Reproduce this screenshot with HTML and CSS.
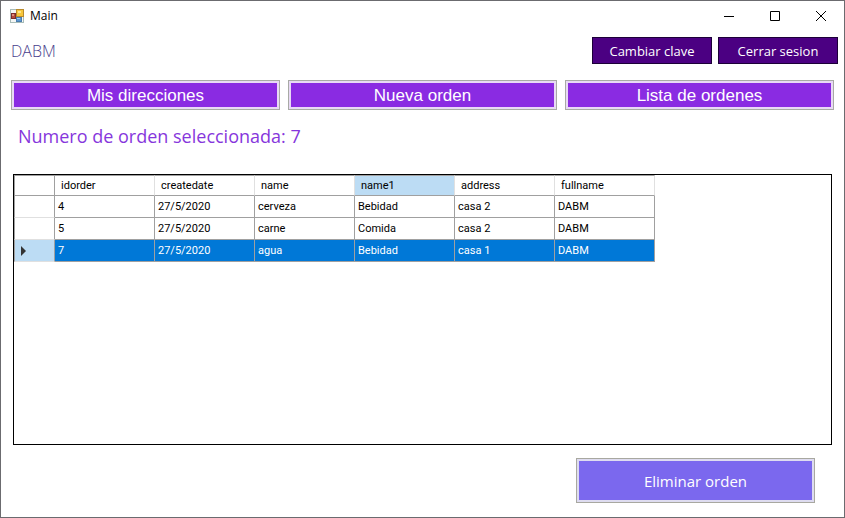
FILE: index.html
```html
<!DOCTYPE html>
<html lang="es">
<head>
<meta charset="utf-8">
<title>Main</title>
<link rel="stylesheet" href="styles.css">
</head>
<body>
<div class="window">
  <header class="titlebar">
    <svg class="app-icon" width="14" height="14" viewBox="0 0 14 14" aria-hidden="true">
      <rect x=".5" y=".5" width="13" height="13" fill="#f4f6f5" stroke="#a9bcb8"/>
      <rect x="6.5" y=".5" width="7" height="7" fill="#f6c63c" stroke="#b98a2c"/>
      <rect x="8" y="2" width="3" height="2" fill="#fde58c"/>
      <rect x="1.500" y="4.500" width="4" height="5" fill="#b5483c" stroke="#7c2b2b"/>
      <rect x="2" y="5" width="2" height="2" fill="#dd8a7d"/>
      <rect x="6.500" y="8.500" width="5" height="4" fill="#5b97d3" stroke="#4a7cae"/>
      <rect x="7" y="9" width="3" height="1" fill="#a9cdf0"/>
    </svg>
    <h1 class="title">Main</h1>
    <div class="controls">
      <button class="control" type="button" aria-label="Minimizar"><svg width="10" height="10" viewBox="0 0 10 10"><path d="M0 5.500H10"/></svg></button>
      <button class="control" type="button" aria-label="Maximizar"><svg width="10" height="10" viewBox="0 0 10 10"><path d="M.5 .5H9.500V9.500H.5Z"/></svg></button>
      <button class="control" type="button" aria-label="Cerrar"><svg width="10" height="10" viewBox="0 0 10 10"><path d="M0 0L10 10M10 0L0 10"/></svg></button>
    </div>
  </header>
  <div class="account">
    <span class="user">DABM</span>
    <button class="session" type="button">Cambiar clave</button>
    <button class="session" type="button">Cerrar sesion</button>
  </div>
  <nav class="tabs">
    <button class="tab" type="button">Mis direcciones</button>
    <button class="tab" type="button">Nueva orden</button>
    <button class="tab" type="button">Lista de ordenes</button>
  </nav>
  <main class="content">
    <p class="selected">Numero de orden seleccionada: 7</p>
    <div class="grid">
      <table class="orders">
        <thead>
          <tr><th class="marker"></th><th>idorder</th><th>createdate</th><th>name</th><th class="current">name1</th><th>address</th><th>fullname</th></tr>
        </thead>
        <tbody>
          <tr><th class="marker"></th><td>4</td><td>27/5/2020</td><td>cerveza</td><td>Bebidad</td><td>casa 2</td><td>DABM</td></tr>
          <tr><th class="marker"></th><td>5</td><td>27/5/2020</td><td>carne</td><td>Comida</td><td>casa 2</td><td>DABM</td></tr>
          <tr class="active"><th class="marker"><svg width="5" height="10" viewBox="0 0 5 10" aria-hidden="true"><path d="M0 0L5 5L0 10Z" fill="#333"/></svg></th><td>7</td><td>27/5/2020</td><td>agua</td><td>Bebidad</td><td>casa 1</td><td>DABM</td></tr>
        </tbody>
      </table>
    </div>
    <button class="delete" type="button">Eliminar orden</button>
  </main>
</div>
</body>
</html>
```
FILE: styles.css
```css
* { box-sizing: border-box; }

body {
  margin: 0;
  background: #fff;
  font-family: "Open Sans", "Noto Sans", sans-serif;
}

button {
  margin: 0;
  padding: 0;
  font-family: inherit;
  color: #fff;
}

.window {
  display: flex;
  flex-direction: column;
  min-height: 100vh;
  border: 1px solid #6b6b6f;
}

.titlebar {
  display: flex;
  align-items: center;
  height: 29px;
  padding-left: 9px;
}

.title {
  flex: 1;
  margin: 0 0 0 6px;
  font-size: 12px;
  font-weight: 400;
  line-height: 16px;
}

.controls { display: flex; align-self: stretch; }

.control {
  display: flex;
  align-items: center;
  justify-content: center;
  width: 46px;
  border: 0;
  background: none;
}

.control svg {
  fill: none;
  stroke: #000;
  overflow: visible;
}

.account {
  display: flex;
  gap: 6px;
  height: 27px;
  margin: 7px 6px 0 10px;
}

.user {
  flex: 1;
  color: #483d8b;
  font-size: 16px;
  font-weight: 300;
  line-height: 28px;
}

.session {
  width: 120px;
  border: 1px solid #1c0038;
  background: #4b0082;
  font-size: 13px;
}

.tabs {
  display: grid;
  grid-template-columns: repeat(3, 1fr);
  gap: 8px;
  margin: 16px 10px 0;
}

.tab {
  height: 30px;
  padding-top: 2px;
  border: 1px solid #a8aaa5;
  background: #8a2be2;
  box-shadow: inset 0 0 0 2px #e8d9f5;
  font-family: "Liberation Sans", sans-serif;
  font-size: 17px;
}

.content {
  display: flex;
  flex: 1;
  flex-direction: column;
  padding: 12px 12px 14px;
}

.selected {
  margin: 0 5px;
  color: #8636dc;
  font-size: 18px;
  line-height: 28px;
}

.grid {
  flex: 1;
  margin-top: 24px;
  border: 1px solid #000;
}

.orders {
  table-layout: fixed;
  width: 641px;
  border-spacing: 0;
  font-family: Roboto, "Liberation Sans", sans-serif;
  font-size: 11px;
  line-height: 16px;
}

.orders th,
.orders td {
  height: 22px;
  padding: 0 3px;
  border-right: 1px solid #a0a0a0;
  border-bottom: 1px solid #a0a0a0;
  font-weight: 400;
  text-align: left;
}

.orders thead th {
  height: 21px;
  padding-left: 6px;
  border-top: 1px solid #a0a0a0;
  border-right-color: #e0e0e0;
}

.orders .marker {
  width: 41px;
  border-left: 1px solid #a0a0a0;
  border-right-color: #a0a0a0;
}

.orders tbody .marker { border-bottom-color: #e0e0e0; }

.marker svg { display: block; margin-left: 3px; }

.orders .current,
.orders .active .marker { background: #bcdcf4; }

.active td {
  background: #0078d7;
  color: #fff;
}

.delete {
  align-self: flex-end;
  width: 239px;
  height: 45px;
  margin: 13px 17px 0 0;
  border: 1px solid #a8a8a0;
  background: #7b68ee;
  box-shadow: inset 0 0 0 2px #dedcf0;
  font-size: 15px;
}
```
